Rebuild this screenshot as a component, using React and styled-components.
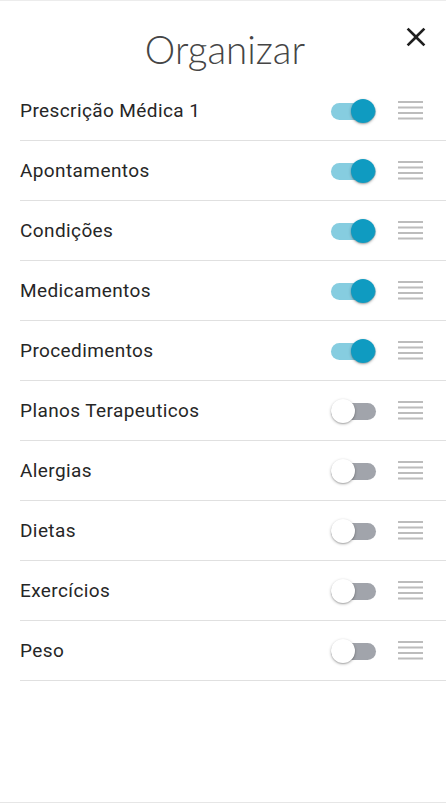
import React, { useState } from "react";
import styled, { createGlobalStyle } from "styled-components";

const GlobalStyle = createGlobalStyle`
  html, body {
    margin: 0;
    padding: 0;
    background: #ffffff;
  }
  body {
    font-family: Roboto, "Liberation Sans", sans-serif;
  }
`;

const Panel = styled.div`
  box-sizing: border-box;
  width: 446px;
  height: 803px;
  border-top: 1px solid #ececec;
  border-bottom: 1px solid #e6e6e6;
  background: #fff;
  display: flex;
  flex-direction: column;
`;

const Header = styled.div`
  height: 80px;
  display: grid;
  grid-template-columns: 1fr auto 1fr;
  align-items: start;
`;

const Title = styled.h1`
  grid-column: 2;
  margin: 0 0 0 4px;
  padding-top: 29px;
  font-family: Lato, "Open Sans", sans-serif;
  font-weight: 300;
  font-size: 38.5px;
  line-height: 38px;
  color: #454545;
`;

const CloseButton = styled.button`
  grid-column: 3;
  justify-self: end;
  margin: 20px 14px 0 0;
  padding: 0;
  border: 0;
  background: none;
  width: 32px;
  height: 32px;
  cursor: pointer;
  color: #1f1f1f;
`;

const List = styled.ul`
  list-style: none;
  margin: 0 0 0 20px;
  padding: 0;
`;

const Row = styled.li`
  height: 59px;
  display: flex;
  align-items: center;
  border-bottom: 1px solid #e0e0e0;
  padding-right: 23px;
`;

const Label = styled.span`
  flex: 1;
  font-size: 19px;
  letter-spacing: 0.4px;
  color: #262626;
`;

const Track = styled.button`
  position: relative;
  width: 45px;
  height: 17px;
  padding: 0;
  border: 0;
  border-radius: 9px;
  margin-top: 1px;
  margin-right: 22px;
  cursor: pointer;
  background: ${(p) => (p.$on ? "#86cde0" : "#a1a4ab")};
`;

const Thumb = styled.span`
  position: absolute;
  top: -4px;
  left: ${(p) => (p.$on ? "20px" : "0")};
  width: 24px;
  height: 24px;
  border-radius: 50%;
  background: ${(p) => (p.$on ? "#0f9bc1" : "#ffffff")};
  box-shadow: 0 1px 3px rgba(0, 0, 0, 0.3), 0 1px 1px rgba(0, 0, 0, 0.12);
`;

const Handle = styled.svg`
  display: block;
  width: 25px;
  height: 20px;
  cursor: grab;
`;

const CloseIcon = () => (
  <svg width="32" height="32" viewBox="0 0 24 24" fill="currentColor">
    <path d="M19 6.41L17.59 5 12 10.59 6.41 5 5 6.41 10.59 12 5 17.59 6.41 19 12 13.41 17.59 19 19 17.59 13.41 12z" />
  </svg>
);

const DragHandle = () => (
  <Handle viewBox="0 0 25 20">
    <rect x="0" y="0" width="25" height="2" fill="#bcbcbc" />
    <rect x="0" y="5.5" width="25" height="2" fill="#bcbcbc" />
    <rect x="0" y="11" width="25" height="2" fill="#bcbcbc" />
    <rect x="0" y="16.5" width="25" height="2" fill="#bcbcbc" />
  </Handle>
);

const initial = [
  { name: "Prescrição Médica 1", on: true },
  { name: "Apontamentos", on: true },
  { name: "Condições", on: true },
  { name: "Medicamentos", on: true },
  { name: "Procedimentos", on: true },
  { name: "Planos Terapeuticos", on: false },
  { name: "Alergias", on: false },
  { name: "Dietas", on: false },
  { name: "Exercícios", on: false },
  { name: "Peso", on: false },
];

export default function App() {
  const [items, setItems] = useState(initial);

  const toggle = (idx) => {
    setItems(items.map((it, i) => (i === idx ? { ...it, on: !it.on } : it)));
  };

  return (
    <>
      <GlobalStyle />
      <Panel>
        <Header>
          <Title>Organizar</Title>
          <CloseButton aria-label="Fechar">
            <CloseIcon />
          </CloseButton>
        </Header>
        <List>
          {items.map((item, i) => (
            <Row key={item.name}>
              <Label>{item.name}</Label>
              <Track $on={item.on} onClick={() => toggle(i)}>
                <Thumb $on={item.on} />
              </Track>
              <DragHandle />
            </Row>
          ))}
        </List>
      </Panel>
    </>
  );
}
